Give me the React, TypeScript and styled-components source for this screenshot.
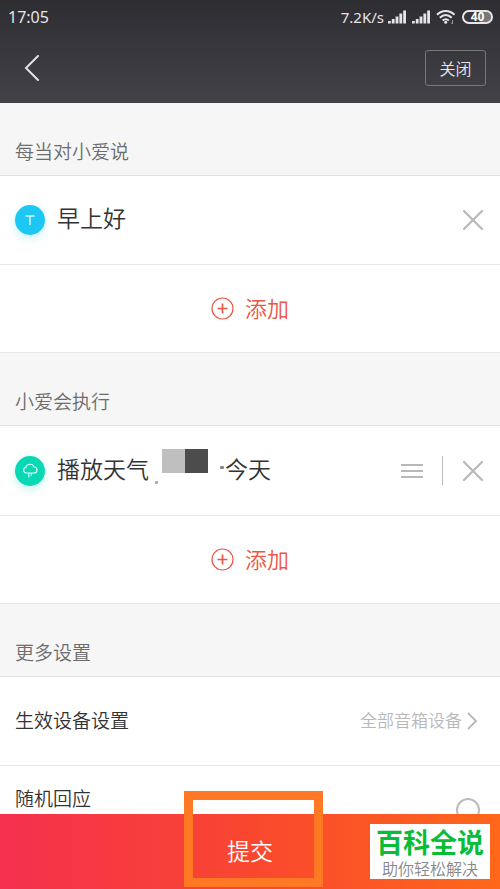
import React from 'react';
import styled, { createGlobalStyle } from 'styled-components';

const GlobalStyle = createGlobalStyle`
  * { box-sizing: border-box; }
  body {
    margin: 0;
    background: #fff;
    font-family: "Noto Sans CJK SC", "Noto Sans", sans-serif;
    font-weight: 350;
  }
  button {
    font: inherit;
    padding: 0;
    border: 0;
    background: none;
    color: inherit;
    cursor: pointer;
  }
  svg { display: block; }
`;

const Screen = styled.div`
  display: flex;
  flex-direction: column;
  height: 100vh;
  overflow: hidden;
`;

const Header = styled.header`
  flex: none;
  background: linear-gradient(#2e2d32, #434248);
  color: #e6e6e8;
`;

const StatusBar = styled.div`
  display: flex;
  align-items: center;
  justify-content: space-between;
  height: 34px;
  padding: 0 7px 0 8px;
  font-family: "Noto Sans", sans-serif;
  font-weight: 400;
  font-size: 16px;
  line-height: 34px;
`;

const StatusIcons = styled.div`
  display: flex;
  align-items: center;
`;

const Speed = styled.span`
  margin-right: 4px;
  font-size: 15px;
`;

const Signal = styled.svg`
  margin-right: 6px;
`;

const Wifi = styled.svg`
  margin-right: 6px;
`;

const Battery = styled.span`
  width: 31px;
  height: 14px;
  border: 2px solid #e6e6e8;
  border-radius: 7px;
  background: linear-gradient(90deg, #38373c 60%, #77767b 60%);
  background-clip: padding-box;
  color: #fff;
  font-size: 12px;
  font-weight: 700;
  line-height: 10px;
  text-align: center;
`;

const NavBar = styled.nav`
  display: flex;
  align-items: center;
  justify-content: space-between;
  height: 69px;
  padding: 0 14px 2px 18px;
`;

const IconButton = styled.button`
  display: flex;
  align-items: center;
  justify-content: center;
  width: 28px;
  height: 36px;
`;

const CloseButton = styled.button`
  width: 61px;
  height: 36px;
  border: 1px solid #77767b;
  border-radius: 3px;
  font-size: 16px;
`;

const Content = styled.main`
  flex: 1;
  min-height: 0;
  overflow: hidden;
`;

const SectionTitle = styled.h2`
  margin: 0;
  height: 73px;
  padding: 34px 15px 0;
  border-bottom: 1px solid #e2e2e2;
  background: #f6f6f6;
  color: #6c6c6c;
  font-size: 19px;
  font-weight: 350;
  line-height: 28px;
`;

const Row = styled.div`
  display: flex;
  align-items: center;
  height: 89px;
  padding: 0 13px 0 15px;
  border-bottom: 1px solid #e8e8e8;
`;

const ActionRow = styled(Row)`
  height: 90px;
`;

const Badge = styled.span<{ $color: string; $glow: string }>`
  flex: none;
  display: flex;
  align-items: center;
  justify-content: center;
  width: 30px;
  height: 30px;
  margin-right: 12px;
  border-radius: 50%;
  background: ${(p) => p.$color};
  box-shadow: 0 3px 8px ${(p) => p.$glow};
`;

const RowText = styled.span`
  display: flex;
  flex: 1;
  align-items: center;
  padding-bottom: 6px;
  color: #333;
  font-size: 23px;
  line-height: 34px;
`;

const Dot = styled.i`
  align-self: flex-end;
  width: 3px;
  height: 3px;
  margin: 0 4px 3px 6px;
  border-radius: 1px;
  background: #aaa;
`;

const Dash = styled.i`
  width: 4px;
  height: 3px;
  margin: 0 1px 0 12px;
  border-radius: 1px;
  background: #888;
`;

const Mosaic = styled.i`
  width: 46px;
  height: 24px;
  margin-bottom: 14px;
  background: linear-gradient(90deg, #bfbfbf 50%, #4c4c4c 50%);
`;

const Divider = styled.span`
  width: 1px;
  height: 29px;
  margin: 0 16px;
  background: #bbb;
`;

const AddButton = styled.button`
  display: flex;
  align-items: center;
  justify-content: center;
  gap: 11px;
  width: 100%;
  height: 88px;
  border-bottom: 1px solid #e6e6e6;
  color: #ea5845;
  font-size: 22px;
`;

const AddLabel = styled.span`
  padding-bottom: 4px;
  line-height: 32px;
`;

const SettingLabel = styled.span`
  flex: 1;
  padding-bottom: 3px;
  color: #333;
  font-size: 19px;
  line-height: 28px;
`;

const DeviceRow = styled(Row)`
  padding-right: 23px;
`;

const DeviceButton = styled.button`
  display: flex;
  align-items: center;
  gap: 5px;
  color: #b8b8b8;
  font-size: 17px;
`;

const DeviceValue = styled.span`
  padding-bottom: 3px;
`;

const RandomRow = styled.label`
  display: flex;
  align-items: flex-start;
  height: 89px;
  padding: 18px 20px 0 15px;
`;

const RoundCheck = styled.input`
  appearance: none;
  width: 24px;
  height: 24px;
  margin: 14px 0 0;
  border: 2px solid #bbb;
  border-radius: 50%;
  background: #fff;
`;

const Footer = styled.footer`
  position: relative;
  flex: none;
`;

const SubmitButton = styled.button`
  display: block;
  width: 100%;
  height: 75px;
  padding-bottom: 3px;
  background: linear-gradient(90deg, #f5304f, #f9472f 50%, #ff671a);
  color: #fff;
  font-size: 23px;
`;

const Highlight = styled.div`
  position: absolute;
  bottom: 2px;
  left: 50%;
  width: 139px;
  height: 96px;
  margin-left: -66px;
  border: 9px solid #ff7823;
  pointer-events: none;
`;

const Watermark = styled.div`
  position: absolute;
  right: 10px;
  bottom: 10px;
  display: flex;
  flex-direction: column;
  align-items: center;
  width: 120px;
  height: 55px;
  background: #fff;
`;

const WatermarkTitle = styled.strong`
  color: #09bd38;
  font-size: 27px;
  font-weight: 700;
  line-height: 36px;
`;

const WatermarkText = styled.span`
  color: #888;
  font-size: 16px;
  line-height: 16px;
`;

const SignalIcon = () => (
  <Signal width="18" height="14" viewBox="0 0 18 14" fill="#e6e6e8" aria-hidden="true">
    <rect x="0" y="11" width="2.8" height="2.500" />
    <rect x="3.8" y="9" width="2.8" height="4.500" />
    <rect x="7.6" y="6.5" width="2.8" height="7" />
    <rect x="11.4" y="3.5" width="2.8" height="10" />
    <rect x="15.2" y="0.5" width="2.8" height="13" />
  </Signal>
);

const WifiIcon = () => (
  <Wifi width="20" height="16" viewBox="0 0 20 16" fill="none" stroke="#e6e6e8" strokeWidth="2" aria-hidden="true">
    <path d="M1 5.8C6 .6 13.500 .6 18.500 5.800M3.800 8.800C7.500 5.200 12 5.200 15.700 8.800M6.600 11.600C8.800 9.800 10.700 9.800 12.900 11.600" />
    <circle cx="9.700" cy="13.300" r="1.500" fill="#e6e6e8" stroke="none" />
    <path d="M16.500 11v4m-1.300-1.300 1.300 1.300" stroke="#99989c" strokeWidth="1" />
  </Wifi>
);

const BackIcon = () => (
  <svg width="16" height="26" viewBox="0 0 16 26" fill="none" stroke="#e2e2e4" strokeWidth="2" strokeLinecap="round" aria-hidden="true">
    <path d="M14 1 2 13l12 12" />
  </svg>
);

const CrossIcon = () => (
  <svg width="22" height="22" viewBox="0 0 22 22" stroke="#b8b8b8" strokeWidth="2.200" strokeLinecap="round" aria-hidden="true">
    <path d="m2 2 18 18M20 2 2 20" />
  </svg>
);

const MenuIcon = () => (
  <svg width="22" height="16" viewBox="0 0 22 16" stroke="#b8b8b8" strokeWidth="2" aria-hidden="true">
    <path d="M0 2h22M0 8h22M0 14h22" />
  </svg>
);

const PlusIcon = () => (
  <svg width="23" height="23" viewBox="0 0 23 23" fill="none" stroke="#ea5845" aria-hidden="true">
    <circle cx="11.500" cy="11.500" r="10.500" strokeWidth="1.200" />
    <path d="M6.500 11.500h10M11.500 6.500v10" strokeWidth="1.700" />
  </svg>
);

const LetterIcon = () => (
  <svg width="10" height="12" viewBox="0 0 10 12" fill="none" stroke="#d6f8ff" strokeWidth="1.400" aria-hidden="true">
    <path d="M.5 2h9M5 2v9" />
  </svg>
);

const CloudIcon = () => (
  <svg width="16" height="16" viewBox="0 0 16 16" fill="none" stroke="#d9fff6" strokeWidth="1.200" strokeLinecap="round" aria-hidden="true">
    <path d="M5 10H4.200a2.900 2.900 0 0 1-.4-5.700C4.700.4 10.900.2 11.900 4a3 3 0 0 1 .1 6h-1M6.800 10v4M9.300 10v2.500M5 10h6" />
  </svg>
);

const ChevronIcon = () => (
  <svg width="10" height="18" viewBox="0 0 10 18" fill="none" stroke="#b8b8b8" strokeWidth="1.800" aria-hidden="true">
    <path d="m1 1 8 8-8 8" />
  </svg>
);

const AddItem = () => (
  <AddButton type="button">
    <PlusIcon />
    <AddLabel>添加</AddLabel>
  </AddButton>
);

export default function App() {
  return (
    <Screen>
      <GlobalStyle />
      <Header>
        <StatusBar>
          <span>17:05</span>
          <StatusIcons>
            <Speed>7.2K/s</Speed>
            <SignalIcon />
            <SignalIcon />
            <WifiIcon />
            <Battery>40</Battery>
          </StatusIcons>
        </StatusBar>
        <NavBar>
          <IconButton type="button" aria-label="返回">
            <BackIcon />
          </IconButton>
          <CloseButton type="button">关闭</CloseButton>
        </NavBar>
      </Header>

      <Content>
        <SectionTitle>每当对小爱说</SectionTitle>
        <Row>
          <Badge $color="#1cc8f3" $glow="#1cc8f340">
            <LetterIcon />
          </Badge>
          <RowText>早上好</RowText>
          <IconButton type="button" aria-label="删除">
            <CrossIcon />
          </IconButton>
        </Row>
        <AddItem />

        <SectionTitle>小爱会执行</SectionTitle>
        <ActionRow>
          <Badge $color="#08d9b4" $glow="#08d9b440">
            <CloudIcon />
          </Badge>
          <RowText>
            播放天气
            <Dot />
            <Mosaic />
            <Dash />
            今天
          </RowText>
          <IconButton type="button" aria-label="排序">
            <MenuIcon />
          </IconButton>
          <Divider />
          <IconButton type="button" aria-label="删除">
            <CrossIcon />
          </IconButton>
        </ActionRow>
        <AddItem />

        <SectionTitle>更多设置</SectionTitle>
        <DeviceRow>
          <SettingLabel>生效设备设置</SettingLabel>
          <DeviceButton type="button">
            <DeviceValue>全部音箱设备</DeviceValue>
            <ChevronIcon />
          </DeviceButton>
        </DeviceRow>
        <RandomRow>
          <SettingLabel>随机回应</SettingLabel>
          <RoundCheck type="checkbox" />
        </RandomRow>
      </Content>

      <Footer>
        <SubmitButton type="button">提交</SubmitButton>
        <Highlight />
        <Watermark>
          <WatermarkTitle>百科全说</WatermarkTitle>
          <WatermarkText>助你轻松解决</WatermarkText>
        </Watermark>
      </Footer>
    </Screen>
  );
}
